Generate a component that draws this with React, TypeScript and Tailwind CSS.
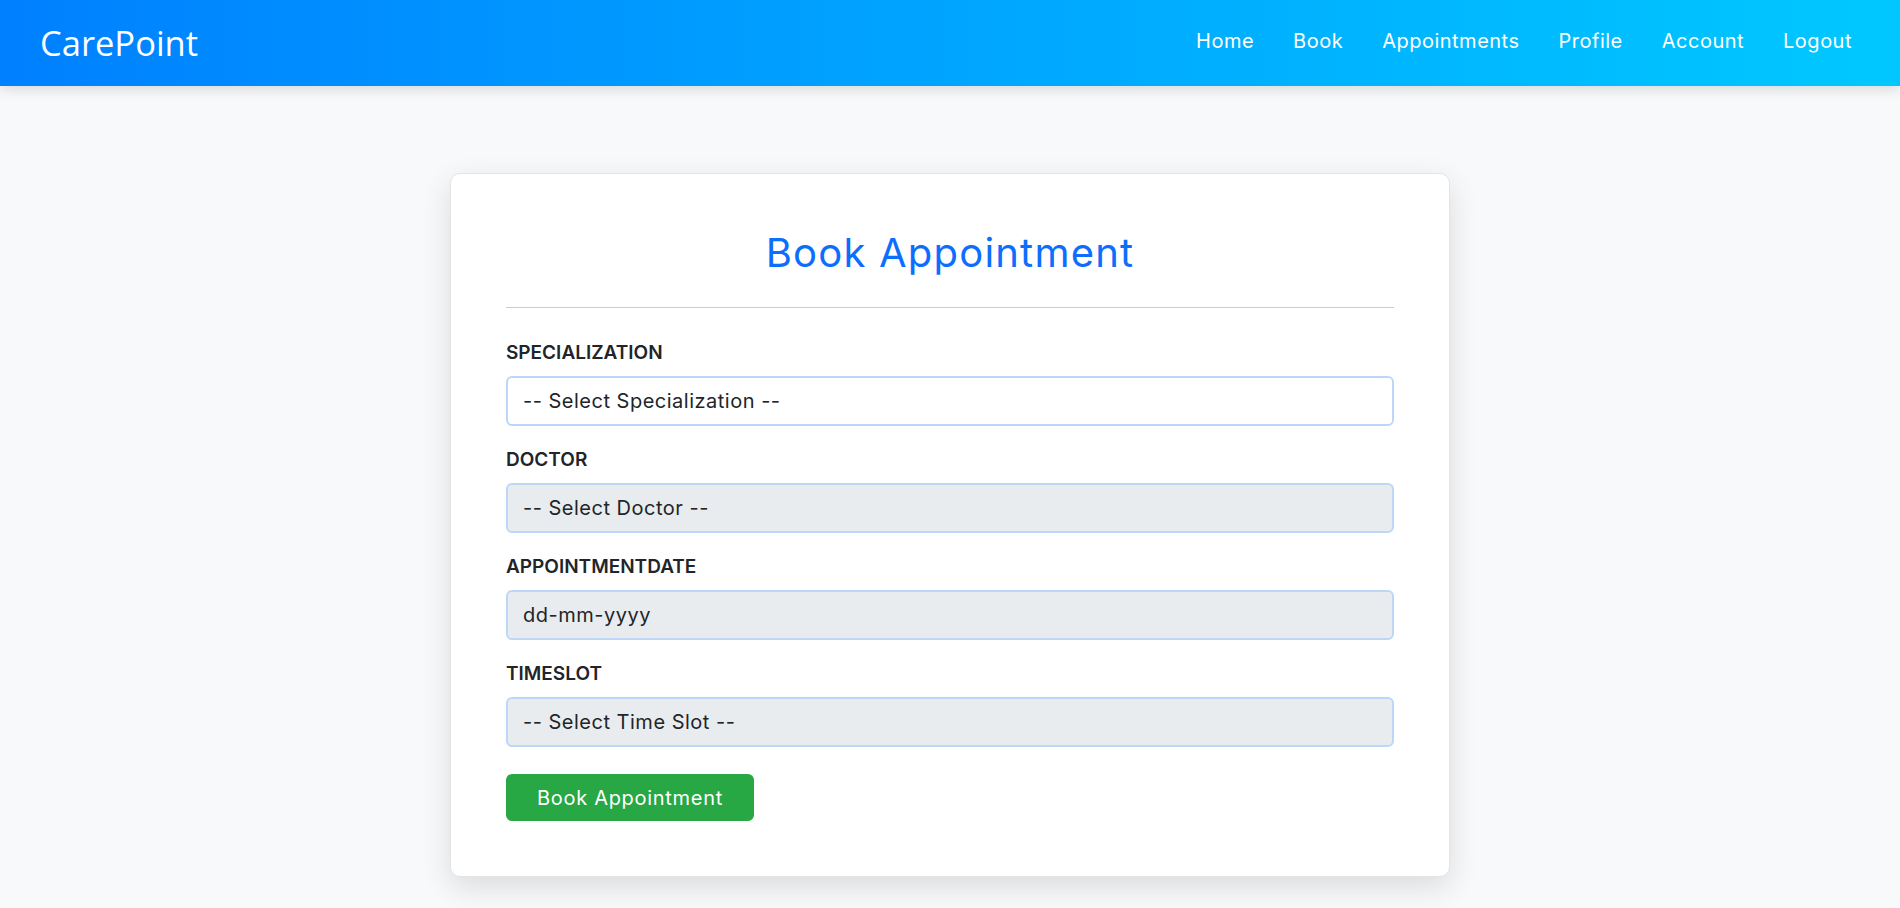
const links = ['Home', 'Book', 'Appointments', 'Profile', 'Account', 'Logout'];

type FieldProps = {
  label: string;
  value: string;
  disabled?: boolean;
};

function Field({ label, value, disabled }: FieldProps) {
  return (
    <div className="flex flex-col gap-[8px]">
      <label className="text-[19px] font-semibold uppercase leading-[30px] text-[#212529]">
        {label}
      </label>
      <div
        className={`flex h-[50px] items-center rounded-[6px] border-2 border-[#bcd7f7] px-[15px] text-[20px] tracking-[0.5px] text-[#212529] ${
          disabled ? 'bg-[#e9ecef]' : 'bg-white'
        }`}
      >
        {value}
      </div>
    </div>
  );
}

export default function App() {
  return (
    <div className="min-h-[908px] bg-[#f8f9fa] font-['Inter',sans-serif]">
      <nav className="flex h-[86px] items-center justify-between bg-gradient-to-r from-[#0080ff] to-[#00c8ff] pl-[40px] pr-[48px] shadow-[0_4px_12px_rgba(0,0,0,0.12)]">
        <a href="#" className="font-['Open_Sans',sans-serif] text-[34.5px] text-white">
          CarePoint
        </a>
        <ul className="flex items-center gap-[39px] pb-[4px]">
          {links.map((l) => (
            <li key={l}>
              <a href="#" className="text-[20px] tracking-[0.5px] text-white">
                {l}
              </a>
            </li>
          ))}
        </ul>
      </nav>

      <main className="flex justify-center pt-[87px] pb-[30px]">
        <div className="w-[1000px] rounded-[10px] border border-[#e2e4e8] bg-white p-[55px] shadow-[0_10px_30px_rgba(0,0,0,0.12)]">
          <h2 className="text-center text-[40px] font-normal leading-[48px] tracking-[1.2px] text-[#0d6efd]">
            Book Appointment
          </h2>
          <hr className="mt-[30px] mb-[30px] border-t border-[#cccccc]" />

          <form className="flex flex-col gap-[19px]">
            <Field label="Specialization" value="-- Select Specialization --" />
            <Field label="Doctor" value="-- Select Doctor --" disabled />
            <Field label="AppointmentDate" value="dd-mm-yyyy" disabled />
            <Field label="TimeSlot" value="-- Select Time Slot --" disabled />
            <div className="pt-[8px]">
              <button
                type="button"
                className="h-[47px] rounded-[6px] bg-[#28a745] px-[31px] text-[20px] tracking-[0.7px] text-white"
              >
                Book Appointment
              </button>
            </div>
          </form>
        </div>
      </main>
    </div>
  );
}
